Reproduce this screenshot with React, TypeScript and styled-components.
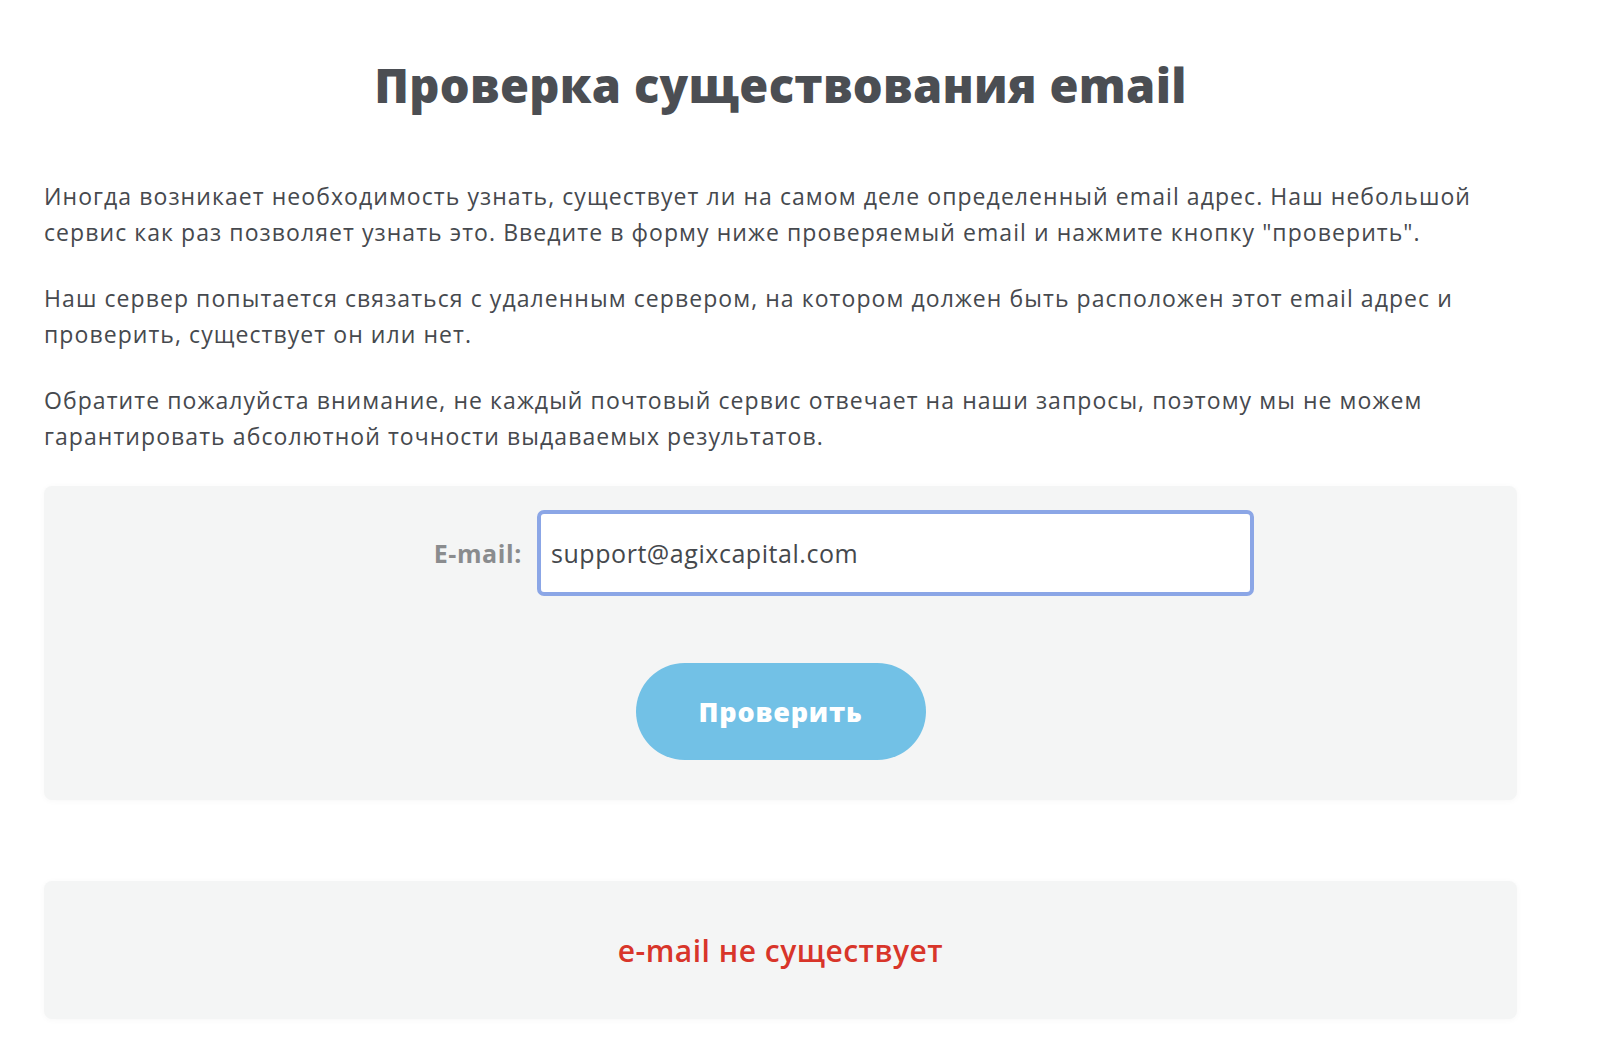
import React from "react";
import styled, { createGlobalStyle } from "styled-components";

const Global = createGlobalStyle`
  html, body { margin: 0; padding: 0; background: #ffffff; }
  body { font-family: "Open Sans", "Noto Sans", sans-serif; }
  * { box-sizing: border-box; }
`;

const Page = styled.main`
  width: 1473px;
  margin-left: 44px;
  padding-top: 52px;
  padding-bottom: 21px;
`;

const Title = styled.h1`
  margin: 0;
  text-align: center;
  font-family: "Open Sans", sans-serif;
  font-weight: 800;
  font-size: 47px;
  letter-spacing: 0.3px;
  line-height: 66px;
  color: #4b4e53;
`;

const Intro = styled.div`
  margin-top: 61px;
  display: flex;
  flex-direction: column;
  gap: 31px;
`;

const Para = styled.p`
  margin: 0;
  font-family: "Open Sans", sans-serif;
  font-weight: 500;
  font-size: 23px;
  letter-spacing: 1.07px;
  line-height: 35.5px;
  color: #46494e;
  white-space: nowrap;
`;

const Panel = styled.section`
  background: #f4f5f5;
  border-radius: 8px;
  box-shadow: 0 1px 6px rgba(0, 0, 0, 0.035);
`;

const FormPanel = styled(Panel)`
  margin-top: 32px;
  padding: 24px 0 40px;
  display: flex;
  flex-direction: column;
  align-items: center;
`;

const FieldRow = styled.label`
  align-self: stretch;
  display: grid;
  grid-template-columns: 478px 717px;
  column-gap: 15px;
  align-items: center;
`;

const FieldLabel = styled.span`
  text-align: right;
  font-family: "Open Sans", sans-serif;
  font-weight: 700;
  font-size: 25px;
  letter-spacing: 0.6px;
  color: #8a8c8e;
`;

const EmailInput = styled.input`
  height: 86px;
  width: 717px;
  padding: 0 10px;
  border: 4px solid #8ba6e6;
  border-radius: 7px;
  background: #ffffff;
  outline: none;
  font-family: "Open Sans", sans-serif;
  font-size: 25px;
  letter-spacing: 0.55px;
  color: #45484c;
  caret-color: #222;
`;

const CheckButton = styled.button`
  margin-top: 67px;
  width: 290px;
  height: 97px;
  border: none;
  border-radius: 49px;
  background: #72c1e6;
  color: #ffffff;
  font-family: "Open Sans", sans-serif;
  font-weight: 800;
  font-size: 27px;
  letter-spacing: 0.8px;
  cursor: pointer;
`;

const ResultPanel = styled(Panel)`
  margin-top: 81px;
  height: 138px;
  display: flex;
  align-items: center;
  justify-content: center;
`;

const ResultText = styled.span`
  font-family: "Open Sans", sans-serif;
  font-weight: 600;
  font-size: 30px;
  letter-spacing: 0.5px;
  color: #d8352a;
`;

export default function App() {
  return (
    <>
      <Global />
      <Page>
        <Title>Проверка существования email</Title>
        <Intro>
          <Para>
            Иногда возникает необходимость узнать, существует ли на самом деле определенный email адрес. Наш небольшой
            <br />
            сервис как раз позволяет узнать это. Введите в форму ниже проверяемый email и нажмите кнопку "проверить".
          </Para>
          <Para>
            Наш сервер попытается связаться с удаленным сервером, на котором должен быть расположен этот email адрес и
            <br />
            проверить, существует он или нет.
          </Para>
          <Para>
            Обратите пожалуйста внимание, не каждый почтовый сервис отвечает на наши запросы, поэтому мы не можем
            <br />
            гарантировать абсолютной точности выдаваемых результатов.
          </Para>
        </Intro>
        <FormPanel>
          <FieldRow>
            <FieldLabel>E-mail:</FieldLabel>
            <EmailInput type="email" defaultValue="support@agixcapital.com" autoFocus />
          </FieldRow>
          <CheckButton type="button">Проверить</CheckButton>
        </FormPanel>
        <ResultPanel>
          <ResultText>e-mail не существует</ResultText>
        </ResultPanel>
      </Page>
    </>
  );
}
